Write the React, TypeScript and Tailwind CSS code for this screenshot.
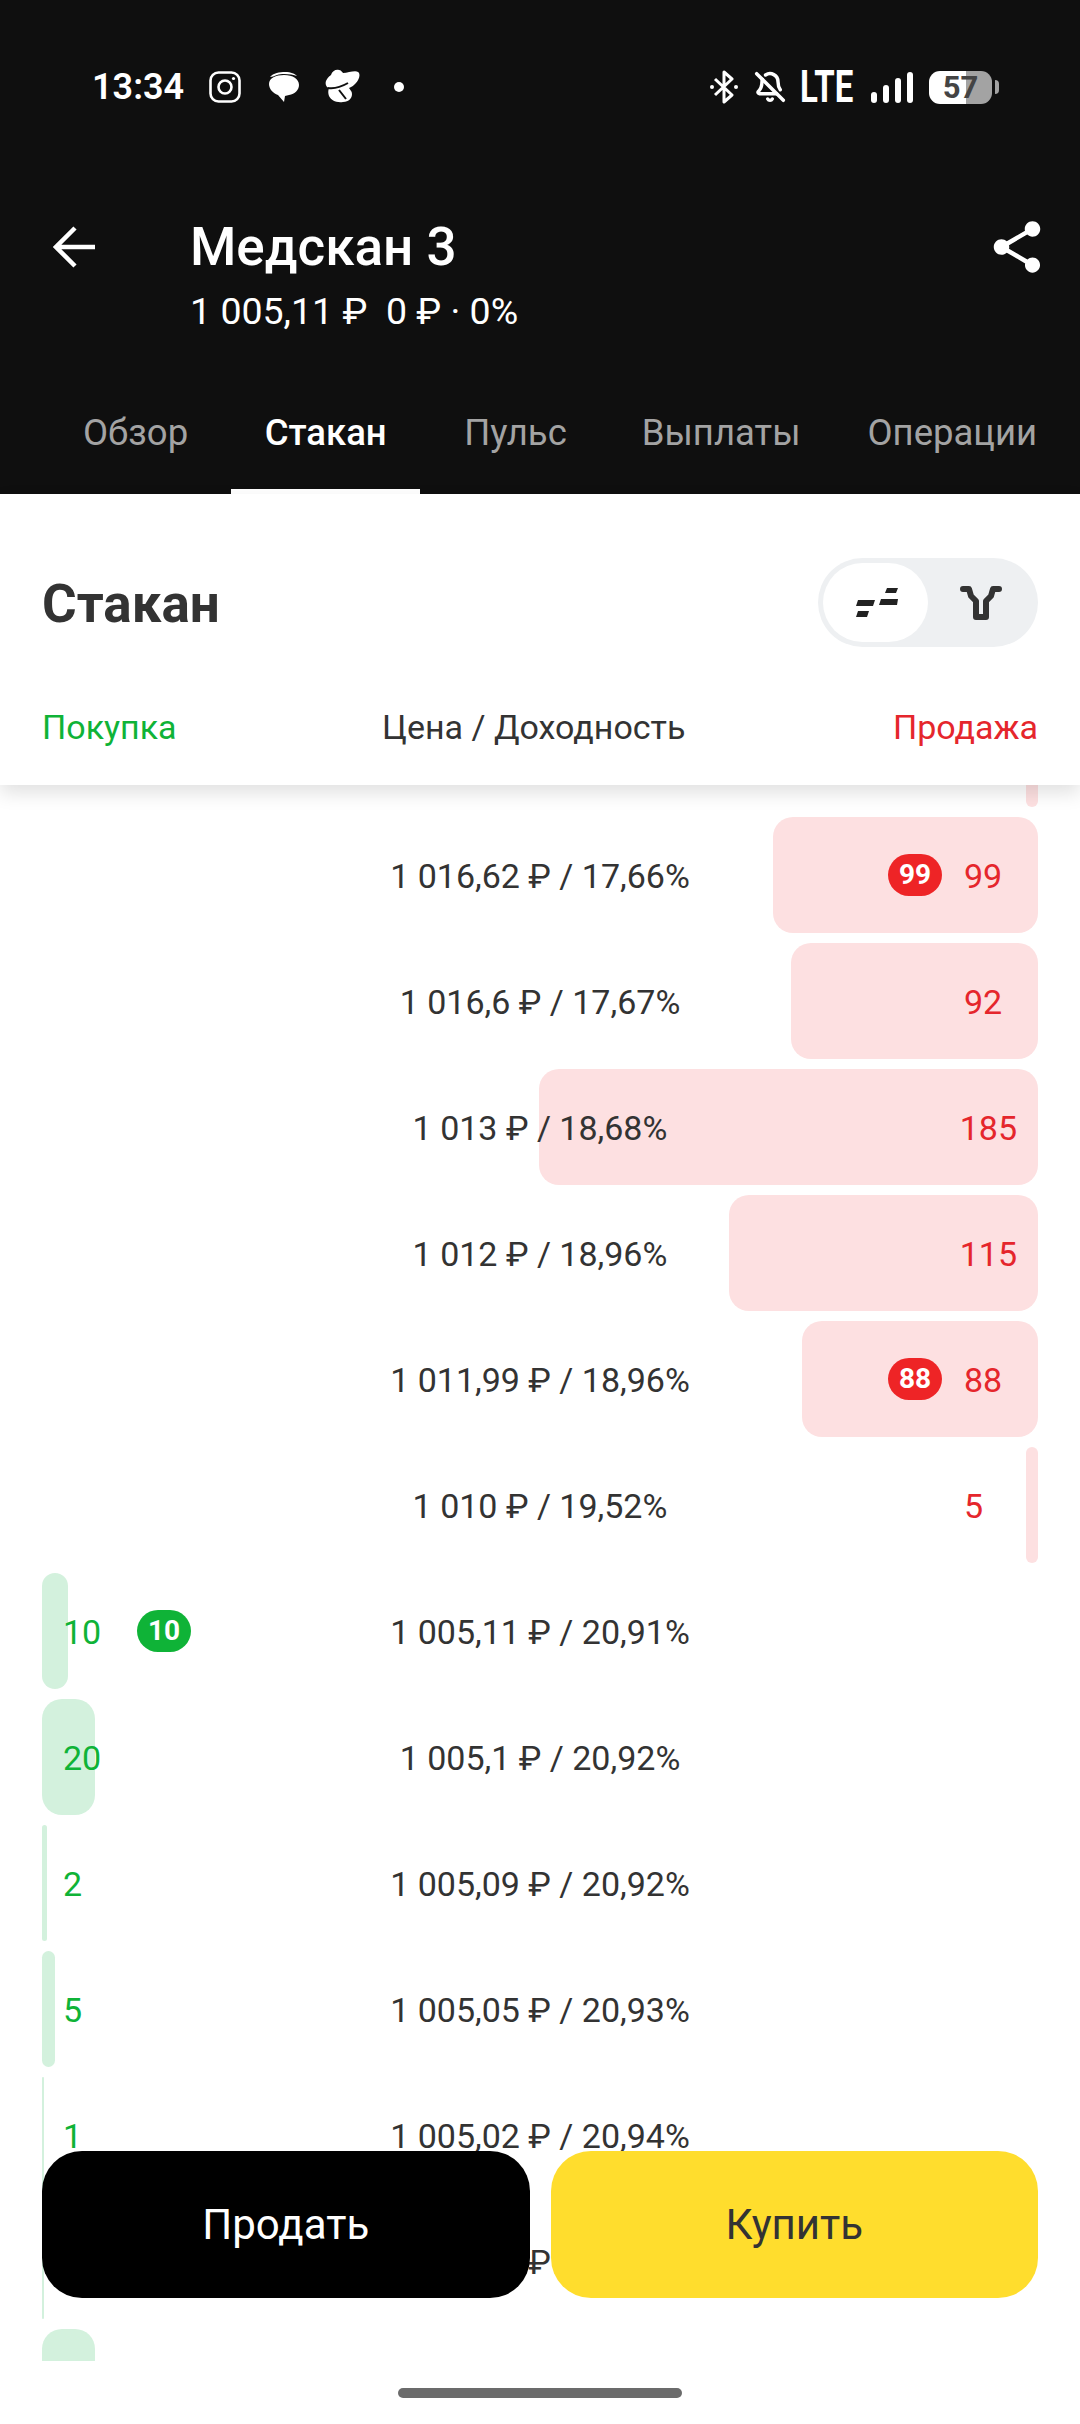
import React from 'react';
import { BellOff } from 'lucide-react';

interface BookRow {
    price: string;
    size: string;
    bar: number;
    badge?: string;
}

const ASKS: BookRow[] = [
    { price: '', size: '', bar: 12 },
    { price: '1 016,62 ₽ / 17,66%', size: '99', bar: 265, badge: '99' },
    { price: '1 016,6 ₽ / 17,67%', size: '92', bar: 247 },
    { price: '1 013 ₽ / 18,68%', size: '185', bar: 499 },
    { price: '1 012 ₽ / 18,96%', size: '115', bar: 309 },
    { price: '1 011,99 ₽ / 18,96%', size: '88', bar: 236, badge: '88' },
    { price: '1 010 ₽ / 19,52%', size: '5', bar: 12 },
];

const BIDS: BookRow[] = [
    { price: '1 005,11 ₽ / 20,91%', size: '10', bar: 26, badge: '10' },
    { price: '1 005,1 ₽ / 20,92%', size: '20', bar: 53 },
    { price: '1 005,09 ₽ / 20,92%', size: '2', bar: 5 },
    { price: '1 005,05 ₽ / 20,93%', size: '5', bar: 13 },
    { price: '1 005,02 ₽ / 20,94%', size: '1', bar: 2 },
    { price: '1 005,01 ₽ / 20,94%', size: '', bar: 2 },
    { price: '', size: '', bar: 53 },
];

function StatusBar() {
    return (
        <div className="flex items-center h-[40px] pl-[92px] pr-[81px] text-white">
            <span className="text-[36px] font-semibold w-[117px]">13:34</span>
            <svg width="32" height="32" viewBox="0 0 32 32" fill="none" stroke="white" strokeWidth="2.6">
                <rect x="1.5" y="1.5" width="29" height="29" rx="8" />
                <circle cx="16" cy="16" r="6.5" />
                <circle cx="24.5" cy="7.5" r="1.6" fill="white" stroke="none" />
            </svg>
            <svg className="ml-[27px]" width="32" height="32" viewBox="0 0 32 32" fill="white">
                <path d="M2 6c3-4 10-5 15-5 6 0 10 2 12 4-5-2-15-3-20-1-3 1-5 2-7 2z" />
                <path d="M1 13C1 7 8 4 16 4c9 0 15 4 15 10 0 5-4 9-10 10l-4 1-1 6-6-7C5 22 1 18 1 13z" />
            </svg>
            <svg className="ml-[21px]" width="39" height="37" viewBox="0 0 39 37" fill="white">
                <path d="M5 12c1-2 2-4 5-6 1-4 5-6 8-5 2 0 3 2 4 3 5 0 12-3 15-1 3 2 1 8-2 11-2 2-4 4-7 5 1 2 3 3 3 6 0 4-3 8-9 8-7 1-12-2-14-6-1-3-1-5 0-8-3-1-4-4-3-7z" />
                <path d="M7 19c6 1 13-1 20-5M18 21l7 9" fill="none" stroke="#0f0f0f" strokeWidth="2" />
            </svg>
            <span className="ml-[34px] w-[10px] h-[10px] rounded-full bg-white" />
            <div className="flex-1" />
            <svg width="30" height="34" viewBox="0 0 30 34" fill="none" stroke="white" strokeWidth="3" strokeLinejoin="round">
                <path d="M6 9l17 16-8 7V2l8 7L6 25" />
                <circle cx="3" cy="17" r="2" fill="white" stroke="none" />
                <circle cx="27" cy="17" r="2" fill="white" stroke="none" />
            </svg>
            <BellOff className="ml-[15px]" size={32} strokeWidth={2.6} />
            <span className="ml-[14px] w-[56px] text-[44px] leading-none font-bold origin-left scale-x-75">LTE</span>
            <div className="ml-[15px] flex items-end gap-[6px] h-[32px]">
                <span className="w-[6px] h-[11px] rounded-full bg-white" />
                <span className="w-[6px] h-[18px] rounded-full bg-white" />
                <span className="w-[6px] h-[25px] rounded-full bg-white" />
                <span className="w-[6px] h-[31px] rounded-full bg-white" />
            </div>
            <div className="ml-[16px] w-[63px] h-[33px] rounded-[11px] bg-[linear-gradient(90deg,#ffffff_37px,#a3a3a3_37px)] flex items-center justify-center">
                <span className="text-[31px] leading-none font-bold text-[#444444]">57</span>
            </div>
            <span className="ml-[3px] w-[4px] h-[14px] rounded-r-sm bg-[#a3a3a3]" />
        </div>
    );
}

function Header() {
    return (
        <div className="h-[494px] bg-[#0f0f0f] text-white flex flex-col pt-[67px]">
            <StatusBar />
            {/* Title */}
            <div className="flex items-start mt-[110px] pl-[53px] pr-[34px]">
                <svg className="mt-[9px]" width="42" height="42" viewBox="0 0 42 42" fill="none" stroke="white" strokeWidth="4.5">
                    <path d="M42 21H3M22 2L3 21l19 19" />
                </svg>
                <div className="ml-[95px] flex-1">
                    <div className="text-[53px] leading-[60px] font-medium">Медскан 3</div>
                    <div className="mt-[12px] text-[37.5px] leading-[44px] whitespace-pre">1 005,11 ₽  0 ₽ · 0%</div>
                </div>
                <svg className="-mr-[2px] -mt-[1px]" width="62" height="62" viewBox="0 0 24 24" fill="white">
                    <path d="M18 16.08c-.76 0-1.44.3-1.96.77L8.91 12.7c.05-.23.09-.46.09-.7s-.04-.47-.09-.7l7.05-4.11c.54.5 1.25.81 2.04.81 1.66 0 3-1.34 3-3s-1.34-3-3-3-3 1.34-3 3c0 .24.04.47.09.7L8.04 9.81C7.5 9.31 6.79 9 6 9c-1.66 0-3 1.34-3 3s1.34 3 3 3c.79 0 1.5-.31 2.04-.81l7.12 4.16c-.05.21-.08.43-.08.65 0 1.61 1.31 2.92 2.92 2.92 1.61 0 2.92-1.31 2.92-2.92s-1.31-2.92-2.92-2.92z" />
                </svg>
            </div>
            {/* Tabs */}
            <div className="mt-auto flex items-stretch h-[98px] pl-[83px] text-[36.5px] text-[#a3a3a3]">
                <span className="mt-[10px]">Обзор</span>
                <div className="ml-[43px] w-[189px] h-full flex flex-col items-center justify-between text-white font-medium">
                    <span className="mt-[10px]">Стакан</span>
                    <span className="w-full h-[5px] bg-white" />
                </div>
                <span className="ml-[44px] mt-[10px]">Пульс</span>
                <span className="ml-[75px] mt-[10px]">Выплаты</span>
                <span className="ml-[67px] mt-[10px]">Операции</span>
            </div>
        </div>
    );
}

function SubHeader() {
    return (
        <div className="relative z-10 h-[291px] bg-white px-[42px] shadow-[0_8px_18px_rgba(0,0,0,0.12)] flex flex-col">
            <div className="flex items-center justify-between mt-[64px] h-[89px]">
                <h2 className="pt-[5px] text-[53px] font-bold text-[#333333]">Стакан</h2>
                {/* view switch */}
                <div className="w-[220px] h-[89px] rounded-full bg-[#eef0f2] p-[5px] flex items-center">
                    <div className="w-[105px] h-[79px] rounded-full bg-white flex items-center justify-center">
                        <svg width="44" height="30" viewBox="0 0 44 30" fill="#222222">
                            <path d="M33 0h11l-2 5H31zM27 11h17l-1 6H25zM4 12h17l-2 6H2zM4 23h11l-2 6H2z" />
                        </svg>
                    </div>
                    <div className="flex-1 flex items-center justify-center">
                        <svg width="42" height="36" viewBox="0 0 42 36" fill="none" stroke="#333333" strokeWidth="6" strokeLinecap="round" strokeLinejoin="round">
                            <path d="M3 4h6l2 7 5 5v16h10V16l5-5 2-7h6" />
                        </svg>
                    </div>
                </div>
            </div>
            <div className="flex items-center justify-between mt-[58px] text-[34px] leading-[44px]">
                <span className="text-[#0fb337]">Покупка</span>
                <span className="text-[#333333] -ml-[2px]">Цена / Доходность</span>
                <span className="text-[#e5262c]">Продажа</span>
            </div>
        </div>
    );
}

function AskRow({ row }: { row: BookRow }) {
    return (
        <div className="relative h-[116px] pt-[3px] grid grid-cols-[1fr_auto_1fr] items-center">
            <div className="absolute right-0 top-0 bottom-0 bg-[#fde0e1] rounded-[20px]" style={{ width: row.bar }} />
            <div />
            <span className="relative text-[34px] text-[#333333]">{row.price}</span>
            <div className="relative flex items-center justify-end gap-[22px] pr-[21px]">
                {row.badge && (
                    <span className="w-[54px] h-[42px] -mt-[3px] rounded-full bg-[#ee2426] text-white text-[28px] font-bold flex items-center justify-center">{row.badge}</span>
                )}
                <span className="min-w-[53px] text-[34px] text-[#e5262c]">{row.size}</span>
            </div>
        </div>
    );
}

function BidRow({ row }: { row: BookRow }) {
    return (
        <div className="relative h-[116px] pt-[3px] grid grid-cols-[1fr_auto_1fr] items-center">
            <div className="absolute left-0 top-0 bottom-0 bg-[#d3f1dd] rounded-[20px]" style={{ width: row.bar }} />
            <div className="relative flex items-center gap-[22px] pl-[21px]">
                <span className="min-w-[52px] text-[34px] text-[#0fb337]">{row.size}</span>
                {row.badge && (
                    <span className="w-[54px] h-[42px] -mt-[3px] rounded-full bg-[#0fb337] text-white text-[28px] font-bold flex items-center justify-center">{row.badge}</span>
                )}
            </div>
            <span className="relative text-[34px] text-[#333333]">{row.price}</span>
            <div />
        </div>
    );
}

export default function App() {
    return (
        <div className="relative w-[1080px] h-[2424px] bg-white overflow-hidden flex flex-col [font-family:Roboto,sans-serif]">
            <Header />
            <SubHeader />

            {/* Order book, scrolled a little */}
            <div className="h-[1576px] overflow-hidden px-[42px]">
                <div className="-mt-[94px] flex flex-col gap-[10px]">
                    {ASKS.map((row, i) => <AskRow key={i} row={row} />)}
                    {BIDS.map((row, i) => <BidRow key={i} row={row} />)}
                </div>
            </div>

            <div className="flex-1 flex justify-center pt-[27px]">
                <span className="w-[284px] h-[10px] rounded-full bg-[#6b6b6b]" />
            </div>

            {/* Floating actions */}
            <div className="absolute left-[42px] right-[42px] top-[2151px] z-20 flex gap-[21px] text-[42px]">
                <button className="flex-1 h-[147px] rounded-[40px] bg-black text-white">Продать</button>
                <button className="flex-1 h-[147px] rounded-[40px] bg-[#ffdd2d] text-[#333333]">Купить</button>
            </div>
        </div>
    );
}
